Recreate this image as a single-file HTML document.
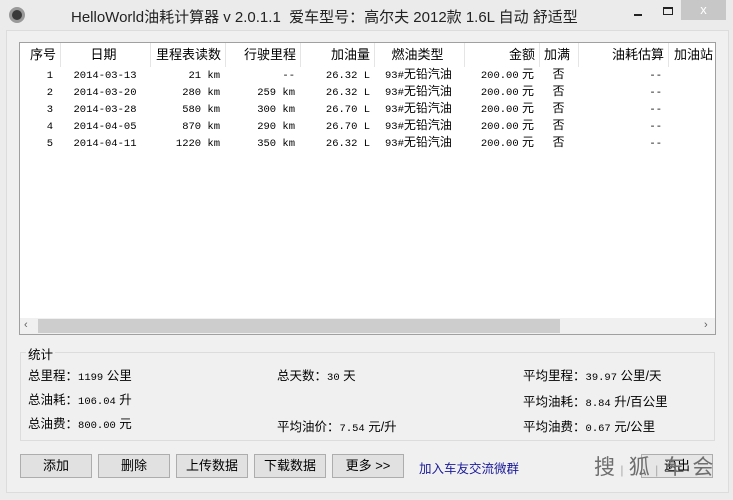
<!DOCTYPE html><html><head><meta charset="utf-8"><style>
*{margin:0;padding:0;box-sizing:border-box}
body{width:733px;height:500px;background:#ececec;font-family:"Liberation Sans","Noto Sans CJK SC",sans-serif;font-size:12px;color:#000;position:relative;overflow:hidden}
.a{position:absolute;white-space:nowrap}
.m{font-family:"Liberation Mono","Noto Sans CJK SC",monospace;font-size:10.5px}
.panel{position:absolute;left:6px;top:30px;width:723px;height:463px;background:#f0f0f0;border:1px solid #dcdcdc}
.list{position:absolute;left:19px;top:42px;width:697px;height:293px;background:#fff;border:1px solid #a0a0a0}
.hd{position:absolute;top:0;height:24px;line-height:24px;font-size:13px;border-right:1px solid #e5e5e5;text-align:right;padding-right:4px}
.c{position:absolute;font-size:12px;text-align:right;height:17px;line-height:17px;white-space:nowrap}
.btn{position:absolute;top:454px;width:72px;height:24px;background:#e1e1e1;border:1px solid #adadad;text-align:center;line-height:22px;font-size:13px}
.st{position:absolute;font-size:12.5px;white-space:nowrap}
</style></head><body>
<div class="a" style="left:0;top:0;width:733px;height:30px;background:#ebebeb"></div>
<div class="a" style="left:9px;top:7px;width:16px;height:16px;border-radius:50%;background:#3a3a3a;border:3px solid #999"></div>
<div class="a" style="left:71px;top:6px;font-size:15px;color:#222">HelloWorld油耗计算器 v 2.0.1.1&nbsp; 爱车型号：高尔夫 2012款 1.6L 自动 舒适型</div>
<div class="a" style="left:634px;top:14px;width:8px;height:2px;background:#222"></div>
<div class="a" style="left:663px;top:7px;width:10px;height:8px;border:1px solid #222;border-top-width:2px"></div>
<div class="a" style="left:681px;top:0;width:45px;height:20px;background:#c7c7c7;color:#fff;text-align:center;line-height:20px;font-size:13px">x</div>
<div class="panel"></div>
<div class="list">
<div class="hd" style="left:0;width:41px">序号</div>
<div class="hd" style="left:41px;width:90px;text-align:center">日期</div>
<div class="hd" style="left:131px;width:75px">里程表读数</div>
<div class="hd" style="left:206px;width:75px">行驶里程</div>
<div class="hd" style="left:281px;width:74px">加油量</div>
<div class="hd" style="left:355px;width:90px;text-align:center">燃油类型</div>
<div class="hd" style="left:445px;width:75px">金额</div>
<div class="hd" style="left:520px;width:39px;text-align:center">加满</div>
<div class="hd" style="left:559px;width:90px">油耗估算</div>
<div class="hd" style="left:649px;width:48px;border:none">加油站</div>
<div class="a" style="left:0;top:275px;width:695px;height:16px;background:#f0f0f0"></div>
<div class="a" style="left:18px;top:276px;width:522px;height:14px;background:#cdcdcd"></div>
<div class="a" style="left:4px;top:276px;font-size:11px;color:#606060">&lsaquo;</div>
<div class="a" style="left:684px;top:276px;font-size:11px;color:#606060">&rsaquo;</div>
</div>
<div id="rows"></div>
<div class="a" style="left:20px;top:352px;width:695px;height:89px;border:1px solid #dcdcdc"></div>
<div class="a" style="left:26px;top:344px;background:#f0f0f0;padding:0 2px;font-size:12.5px">统计</div>
<div class="st" style="left:28px;top:365px">总里程：<span class="m">1199</span> 公里</div>
<div class="st" style="left:277px;top:365px">总天数：<span class="m">30</span> 天</div>
<div class="st" style="left:523px;top:365px">平均里程：<span class="m">39.97</span> 公里/天</div>
<div class="st" style="left:28px;top:389px">总油耗：<span class="m">106.04</span> 升</div>
<div class="st" style="left:523px;top:391px">平均油耗：<span class="m">8.84</span> 升/百公里</div>
<div class="st" style="left:28px;top:413px">总油费：<span class="m">800.00</span> 元</div>
<div class="st" style="left:277px;top:416px">平均油价：<span class="m">7.54</span> 元/升</div>
<div class="st" style="left:523px;top:416px">平均油费：<span class="m">0.67</span> 元/公里</div>
<div class="btn" style="left:20px">添加</div>
<div class="btn" style="left:98px">删除</div>
<div class="btn" style="left:176px">上传数据</div>
<div class="btn" style="left:254px">下载数据</div>
<div class="btn" style="left:332px">更多 &gt;&gt;</div>
<div class="a" style="left:419px;top:458px;color:#1a1a9a;font-size:12.5px">加入车友交流微群</div>
<div class="btn" style="left:641px;background:#e6e6e6">退出</div>
<div class="a" style="left:594px;top:451px;font-size:21px;color:#6e6e6e;letter-spacing:1px">搜<span style="font-size:12px;color:#aaa"> | </span>狐<span style="font-size:12px;color:#aaa"> | </span>车 会</div>
<script>
var d=[["1","2014-03-13","21 km","--","26.32 L"],["2","2014-03-20","280 km","259 km","26.32 L"],["3","2014-03-28","580 km","300 km","26.70 L"],["4","2014-04-05","870 km","290 km","26.70 L"],["5","2014-04-11","1220 km","350 km","26.32 L"]];
function m(s){return '<span class="m">'+s+'</span>';}
var h="";d.forEach(function(r,i){var t=66+i*17;
h+='<div class="c" style="left:20px;width:33px;top:'+t+'px">'+m(r[0])+'</div>';
h+='<div class="c" style="left:60px;width:90px;top:'+t+'px;text-align:center">'+m(r[1])+'</div>';
h+='<div class="c" style="left:150px;width:70px;top:'+t+'px">'+m(r[2])+'</div>';
h+='<div class="c" style="left:225px;width:70px;top:'+t+'px">'+m(r[3])+'</div>';
h+='<div class="c" style="left:300px;width:70px;top:'+t+'px">'+m(r[4])+'</div>';
h+='<div class="c" style="left:385px;width:75px;top:'+t+'px;text-align:left">'+m('93#')+'无铅汽油</div>';
h+='<div class="c" style="left:464px;width:70px;top:'+t+'px">'+m('200.00')+' 元</div>';
h+='<div class="c" style="left:539px;width:39px;top:'+t+'px;text-align:center">否</div>';
h+='<div class="c" style="left:600px;width:62px;top:'+t+'px">'+m('--')+'</div>';});
document.getElementById("rows").innerHTML=h;
</script>
</body></html>
